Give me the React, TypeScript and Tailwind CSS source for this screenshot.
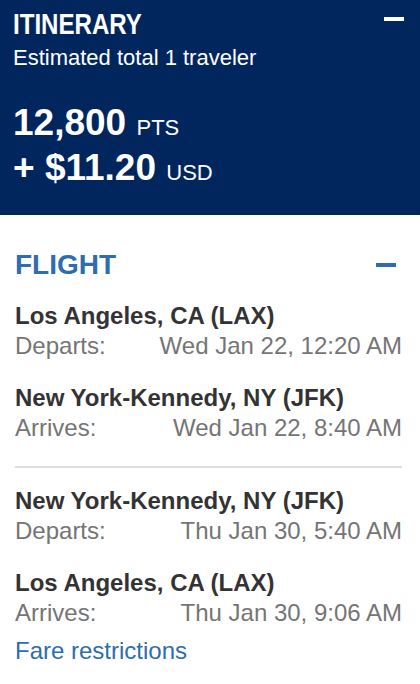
export default function App() {
  const legs = [
    [
      { city: "Los Angeles, CA (LAX)", label: "Departs:", time: "Wed Jan 22, 12:20 AM" },
      { city: "New York-Kennedy, NY (JFK)", label: "Arrives:", time: "Wed Jan 22, 8:40 AM" },
    ],
    [
      { city: "New York-Kennedy, NY (JFK)", label: "Departs:", time: "Thu Jan 30, 5:40 AM" },
      { city: "Los Angeles, CA (LAX)", label: "Arrives:", time: "Thu Jan 30, 9:06 AM" },
    ],
  ];

  return (
    <div className="w-[420px] min-h-[684px] bg-white font-['Liberation_Sans',Arial,sans-serif]">
      {/* itinerary summary */}
      <div className="bg-[#01265e] text-white pl-[13px] pr-4 pt-[7px] pb-[25px]">
        <div className="flex items-start justify-between">
          <h1 className="inline-block origin-left scale-x-[0.83] font-bold text-[29px] leading-[35px]">
            ITINERARY
          </h1>
          <span className="block w-5 h-[4px] bg-white mt-[10px]" />
        </div>
        <p className="text-[22px] leading-[28px] mt-[2px]">Estimated total 1 traveler</p>
        <div className="mt-[28px] font-bold text-[37px] leading-[45px]">
          <div>
            12,800 <span className="text-[22px] leading-none font-normal">PTS</span>
          </div>
          <div>
            + $11.20 <span className="text-[22px] leading-none font-normal">USD</span>
          </div>
        </div>
      </div>

      {/* flight details */}
      <div className="pl-[15px] pr-[18px] pt-[34px]">
        <div className="flex items-center justify-between">
          <h2 className="text-[28px] leading-[32px] font-bold text-[#2e6daf]">FLIGHT</h2>
          <span className="block w-5 h-[4px] bg-[#2e6daf] mt-[-1px] mr-[6px]" />
        </div>

        <div className="mt-5">
          {legs.map((leg, i) => (
            <div key={i} className={i > 0 ? "border-t-2 border-[#dddddd] mt-[23px] pt-[18px]" : ""}>
              {leg.map((s, j) => (
                <div key={j} className={j > 0 ? "mt-[22px]" : ""}>
                  <div className="text-[24px] leading-[30px] font-bold text-[#333333]">{s.city}</div>
                  <div className="flex justify-between text-[24px] leading-[30px] text-[#757575]">
                    <span>{s.label}</span>
                    <span>{s.time}</span>
                  </div>
                </div>
              ))}
            </div>
          ))}
        </div>

        <a href="#" className="block mt-[8px] text-[24px] leading-[30px] text-[#2e6daf]">
          Fare restrictions
        </a>
      </div>
    </div>
  );
}
